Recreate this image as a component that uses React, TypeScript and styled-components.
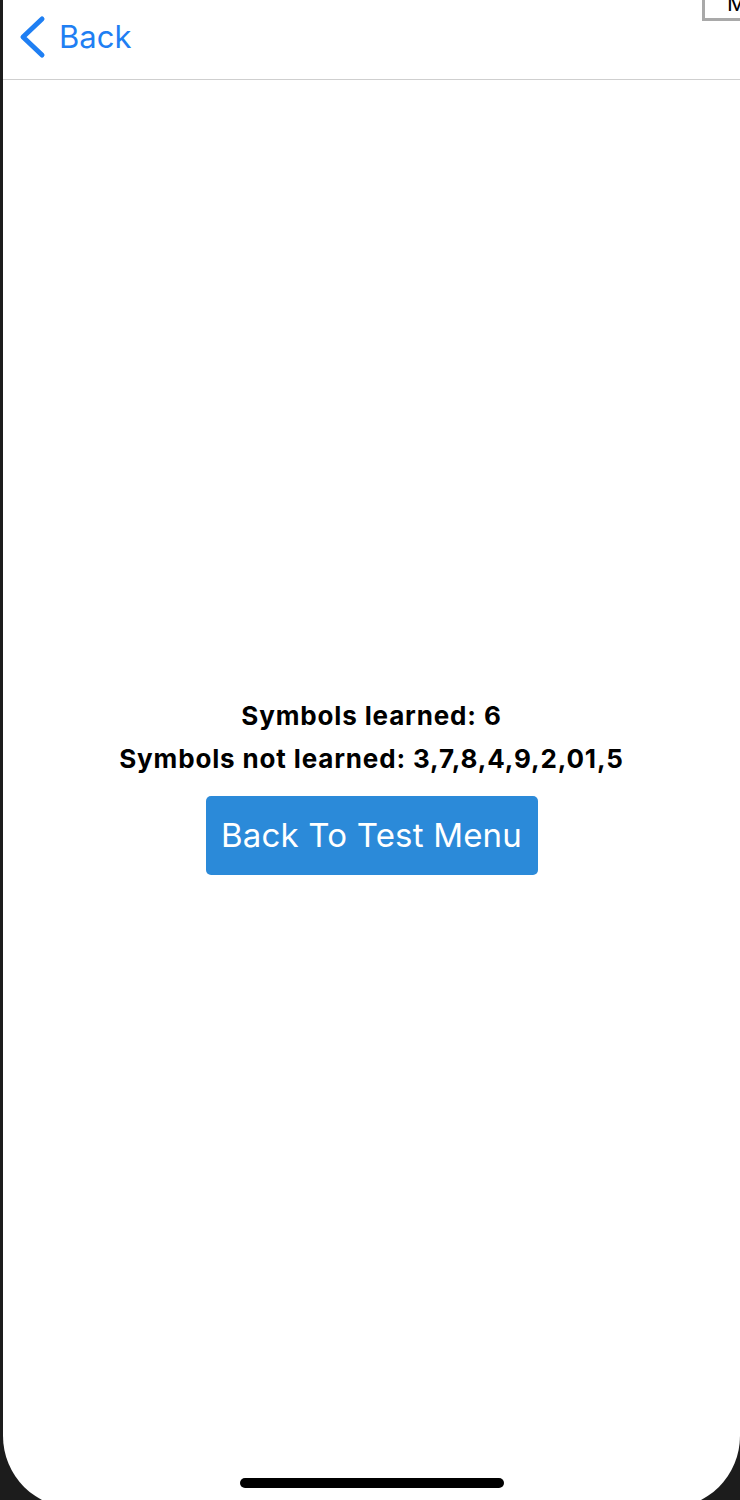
import React from "react";
import styled, { createGlobalStyle } from "styled-components";

const Global = createGlobalStyle`
  html, body { margin: 0; padding: 0; background: #1c1c1c; height: 1500px; overflow: hidden; }
  #root { height: 1500px; }
`;

const Device = styled.div`
  height: 1500px;
  padding-left: 3px;
  overflow: hidden;
  font-family: Inter, "Liberation Sans", Arial, sans-serif;
`;

const Screen = styled.div`
  position: relative;
  height: 1508px;
  background: #fff;
  border-bottom-left-radius: 72px;
  border-bottom-right-radius: 72px;
  display: flex;
  flex-direction: column;
`;

const NavBar = styled.div`
  height: 79px;
  border-bottom: 1px solid #cfcfcf;
  display: flex;
  align-items: center;
  padding-left: 15px;
  flex-shrink: 0;
`;

const BackButton = styled.button`
  display: flex;
  align-items: center;
  gap: 13px;
  background: none;
  border: none;
  padding: 0;
  color: #1f7ff3;
  font-family: Inter, "Liberation Sans", Arial, sans-serif;
  font-size: 31px;
  cursor: pointer;
  margin-top: -6px;
`;

const CornerBox = styled.div`
  position: absolute;
  top: -20px;
  left: 699px;
  width: 60px;
  height: 41px;
  border: 3px solid #a9a9a9;
  background: #fff;
  box-sizing: border-box;
  font-size: 22px;
  color: #000;
  padding-left: 22px;
  line-height: 40px;
  overflow: hidden;
`;

const Content = styled.div`
  flex: 1;
  display: flex;
  flex-direction: column;
  align-items: center;
  justify-content: center;
  padding-bottom: 20px;
`;

const Line = styled.div`
  font-weight: 700;
  font-size: 26px;
  letter-spacing: 0.85px;
  line-height: 43px;
  color: #000;
  text-align: center;
`;

const MenuButton = styled.button`
  margin-top: 16px;
  width: 332px;
  height: 79px;
  background: #2b8ad9;
  border: none;
  border-radius: 5px;
  color: #fff;
  font-family: Inter, "Liberation Sans", Arial, sans-serif;
  font-size: 33px;
  letter-spacing: 0.2px;
  cursor: pointer;
`;

const HomeIndicator = styled.div`
  position: absolute;
  left: 237px;
  bottom: 20px;
  width: 264px;
  height: 10px;
  border-radius: 5px;
  background: #000;
`;

export default function App() {
  return (
    <>
      <Global />
      <Device>
        <Screen>
          <NavBar>
            <BackButton>
              <svg width="28" height="44" viewBox="0 0 28 44">
                <path
                  d="M24 4 L5 22 L24 40"
                  fill="none"
                  stroke="#1f7ff3"
                  strokeWidth="5"
                  strokeLinecap="round"
                  strokeLinejoin="round"
                />
              </svg>
              Back
            </BackButton>
          </NavBar>
          <CornerBox>M</CornerBox>
          <Content>
            <Line>Symbols learned: 6</Line>
            <Line>Symbols not learned: 3,7,8,4,9,2,01,5</Line>
            <MenuButton>Back To Test Menu</MenuButton>
          </Content>
          <HomeIndicator />
        </Screen>
      </Device>
    </>
  );
}
